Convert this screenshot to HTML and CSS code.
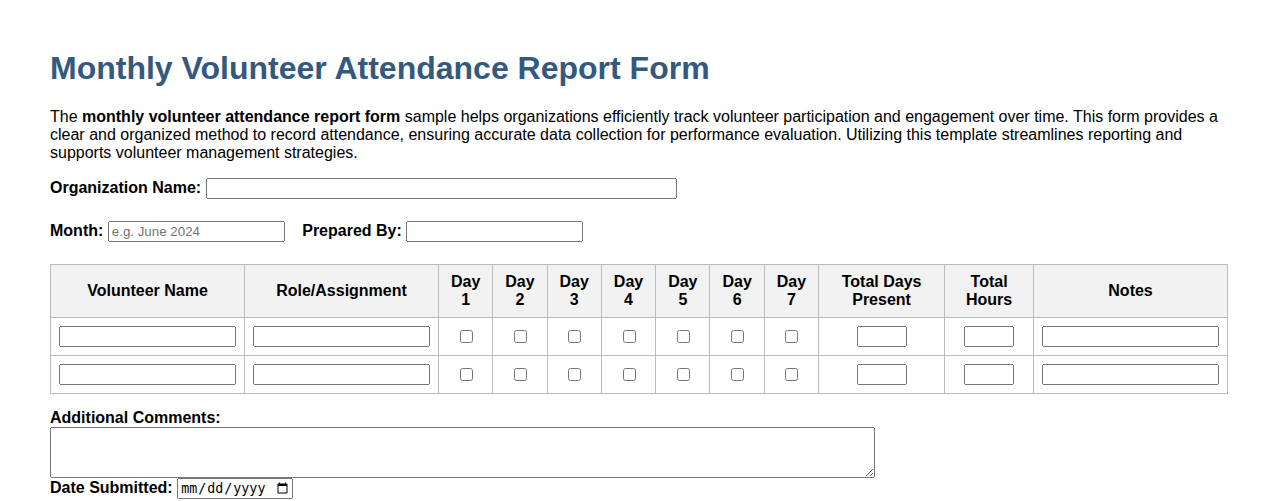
FILE: index.html
```html
<!DOCTYPE html>
<html>
  <head>
    <meta http-equiv="Content-Type" content="text/html; charset=UTF-8" />
    <meta name="viewport" content="width=device-width, initial-scale=1" />
    <title>Monthly Volunteer Attendance Report Form</title>
    <link rel="stylesheet" href="styles.css">
  </head>

  <body>
    <div class="page">
      <h1>Monthly Volunteer Attendance Report Form</h1>
      <p class="intro">
        The <b>monthly volunteer attendance report form</b> sample helps organizations efficiently track volunteer participation and engagement over time. This form provides a clear and organized method to record attendance, ensuring accurate data collection for performance evaluation. Utilizing this template streamlines reporting and supports volunteer management strategies.
      </p>

      <div class="form-row">
        <label for="org-name">Organization Name:</label>
        <input id="org-name" class="input-wide" type="text" />
      </div>

      <div class="form-row">
        <label for="month">Month:</label>
        <input id="month" class="input-short" type="text" placeholder="e.g. June 2024" />
        <label for="prepared-by" class="label-spaced">Prepared By:</label>
        <input id="prepared-by" class="input-short" type="text" />
      </div>

      <table class="attendance">
        <colgroup>
          <col class="col-name" />
          <col class="col-name" />
          <col class="col-day" />
          <col class="col-day" />
          <col class="col-day" />
          <col class="col-day" />
          <col class="col-day" />
          <col class="col-day" />
          <col class="col-day" />
          <col class="col-days" />
          <col class="col-hours" />
          <col class="col-notes" />
        </colgroup>
        <tr>
          <th>Volunteer Name</th>
          <th>Role/Assignment</th>
          <th>Day<br />1</th>
          <th>Day<br />2</th>
          <th>Day<br />3</th>
          <th>Day<br />4</th>
          <th>Day<br />5</th>
          <th>Day<br />6</th>
          <th>Day<br />7</th>
          <th>Total Days<br />Present</th>
          <th>Total<br />Hours</th>
          <th>Notes</th>
        </tr>
        <tr>
          <td><input class="cell-input" type="text" /></td>
          <td><input class="cell-input" type="text" /></td>
          <td><input type="checkbox" /></td>
          <td><input type="checkbox" /></td>
          <td><input type="checkbox" /></td>
          <td><input type="checkbox" /></td>
          <td><input type="checkbox" /></td>
          <td><input type="checkbox" /></td>
          <td><input type="checkbox" /></td>
          <td><input class="num-input" type="text" /></td>
          <td><input class="num-input" type="text" /></td>
          <td><input class="cell-input" type="text" /></td>
        </tr>
        <tr>
          <td><input class="cell-input" type="text" /></td>
          <td><input class="cell-input" type="text" /></td>
          <td><input type="checkbox" /></td>
          <td><input type="checkbox" /></td>
          <td><input type="checkbox" /></td>
          <td><input type="checkbox" /></td>
          <td><input type="checkbox" /></td>
          <td><input type="checkbox" /></td>
          <td><input type="checkbox" /></td>
          <td><input class="num-input" type="text" /></td>
          <td><input class="num-input" type="text" /></td>
          <td><input class="cell-input" type="text" /></td>
        </tr>
      </table>

      <div class="comments">
        <label for="comments">Additional Comments:</label>
        <textarea id="comments" class="comments-box"></textarea>
      </div>

      <div class="date-row">
        <label for="date-submitted">Date Submitted:</label>
        <input id="date-submitted" class="date-input" type="date" />
      </div>
    </div>
  </body>
</html>
```

FILE: styles.css
```css
body {
  margin: 0;
  font-family: "Liberation Sans", Arial, sans-serif;
  font-size: 16px;
  color: black;
  background-color: white;
}

.page {
  padding: 29px 50px 20px 50px;
}

h1 {
  color: #34597f;
  font-size: 32px;
  font-weight: bold;
  margin: 21px 0 21px 0;
}

.intro {
  margin: 0 0 16px 0;
  line-height: 18px;
}

label {
  font-weight: bold;
}

.form-row {
  margin-bottom: 22px;
}

.input-wide {
  width: 471px;
  box-sizing: border-box;
}

.input-short {
  width: 177px;
  box-sizing: border-box;
}

.label-spaced {
  margin-left: 13px;
}

.attendance {
  width: 100%;
  border-collapse: collapse;
  margin-bottom: 15px;
}

.attendance th,
.attendance td {
  border: 1px solid #bbbbbb;
  padding: 8px;
  text-align: center;
}

.attendance th {
  background-color: #f2f2f2;
  line-height: 18px;
}

.col-name {
  width: 194px;
}

.col-day {
  width: 54.3px;
}

.col-days {
  width: 126px;
}

.col-hours {
  width: 89px;
}

.cell-input {
  width: 100%;
  box-sizing: border-box;
}

.num-input {
  width: 50px;
  box-sizing: border-box;
}

.comments label {
  display: block;
}

.comments-box {
  width: 825px;
  height: 51px;
  box-sizing: border-box;
  margin: 0;
  display: block;
}

.date-input {
  width: 116px;
  box-sizing: border-box;
}
```
